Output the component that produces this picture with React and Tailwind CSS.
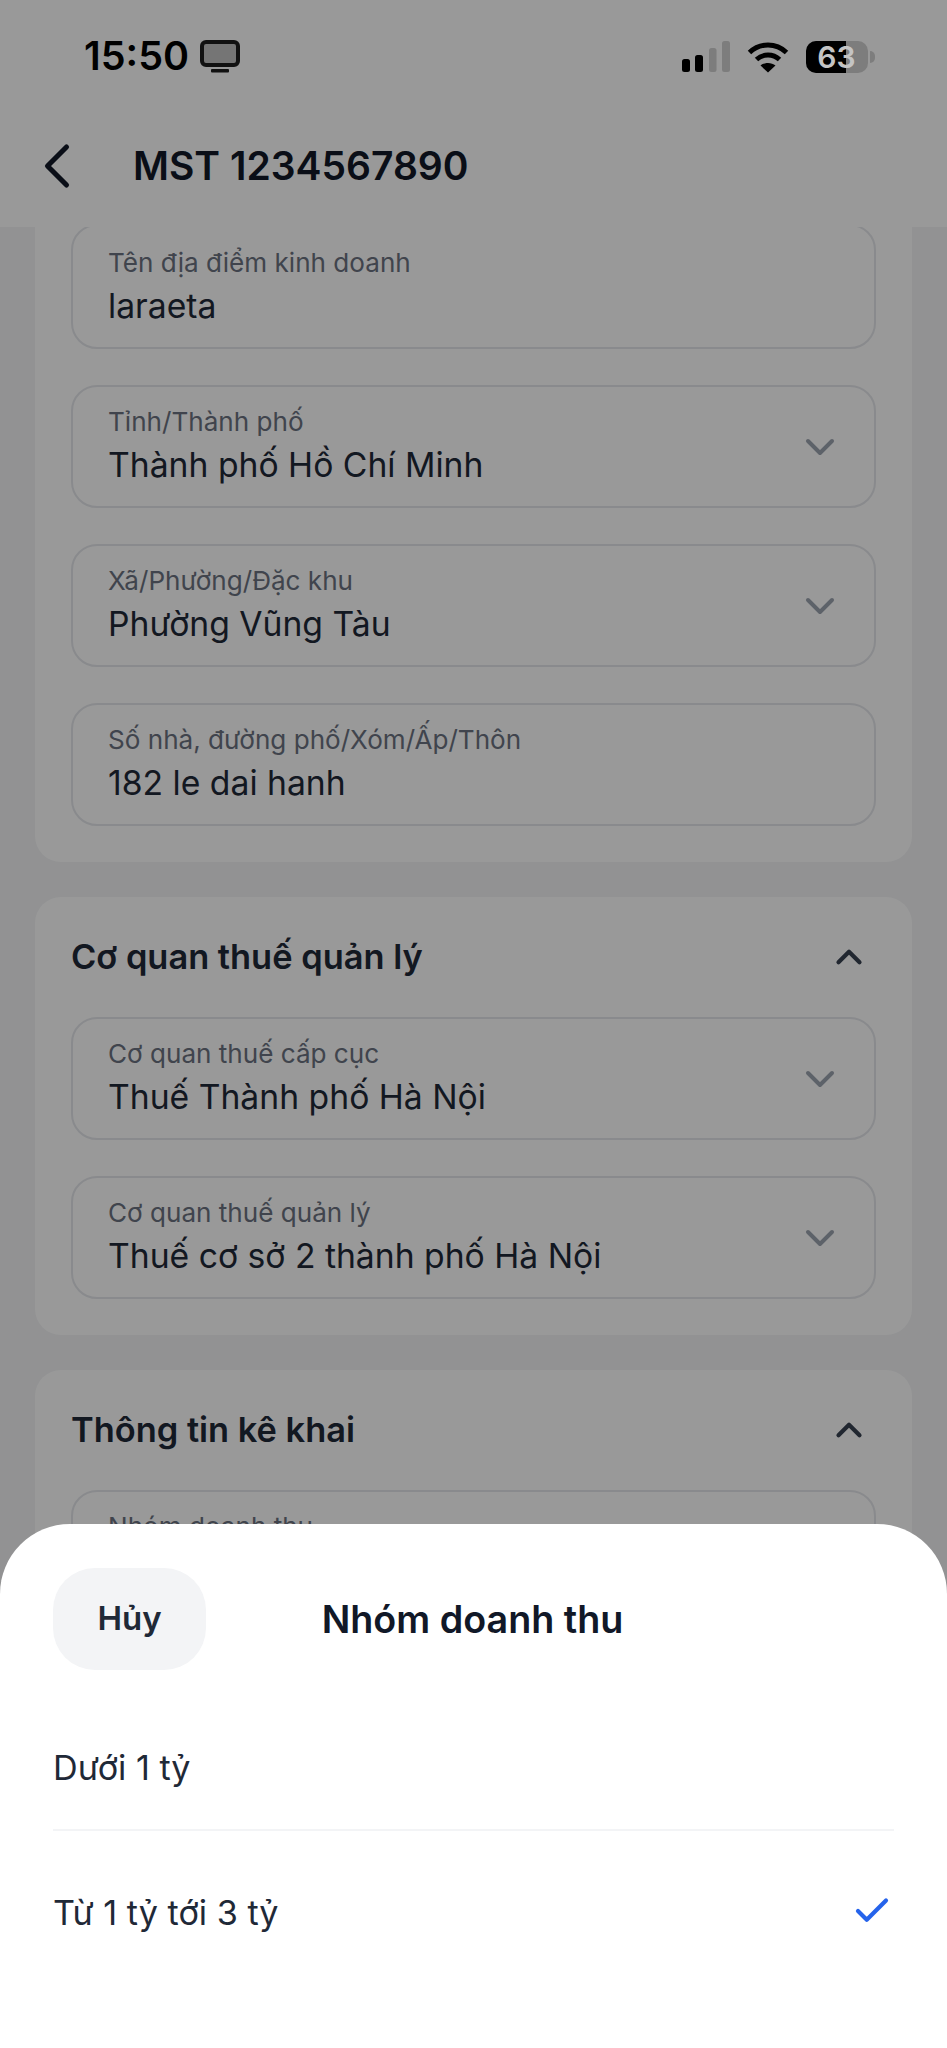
import React from 'react'
import { Check, ChevronDown, ChevronLeft, ChevronUp } from 'lucide-react'

const font = { fontFamily: 'Inter, "Noto Sans", sans-serif' }

function MonitorIcon() {
  return (
    <svg width="40" height="33" viewBox="0 0 40 33" fill="none">
      <rect x="2" y="2" width="36" height="23" rx="4" fill="#757575" stroke="#111111" strokeWidth="4" />
      <rect x="11" y="29" width="18" height="3.5" rx="1" fill="#111111" />
    </svg>
  )
}

function SignalIcon() {
  return (
    <svg width="48" height="32" viewBox="0 0 48 32">
      <rect x="0" y="18" width="8" height="13" rx="2.5" fill="#000" />
      <rect x="13" y="14" width="8" height="17" rx="2.5" fill="#000" />
      <rect x="27" y="7" width="7.5" height="24" rx="2.5" fill="#7d7d7d" />
      <rect x="40" y="0" width="8" height="31" rx="2.5" fill="#7d7d7d" />
    </svg>
  )
}

function WifiIcon() {
  return (
    <svg width="44" height="32" viewBox="0 0 42 32" fill="none" stroke="#000" strokeWidth="5">
      <path d="M2.5 11.5C13 1.5 29 1.5 39.5 11.5" />
      <path d="M9.5 18.5C16 12.5 26 12.5 32.5 18.5" />
      <path d="M21 31.5L13.5 24.5C17.5 21 24.5 21 28.5 24.5Z" fill="#000" stroke="none" />
    </svg>
  )
}

function Battery() {
  return (
    <div className="flex items-center gap-[2px]">
      <div className="relative flex h-[32px] w-[62px] rounded-[10px] bg-[#7d7d7d]">
        <div className="h-full w-[40px] rounded-l-[10px] bg-black" />
        <span className="absolute inset-0 flex items-center justify-center pr-[1px] text-[30px] leading-[32px] font-semibold text-[#c4c4c4]">63</span>
      </div>
      <div className="h-[12px] w-[5px] rounded-r-full bg-[#7d7d7d]" />
    </div>
  )
}

function Field({ label, value, select, scrolled }) {
  return (
    <div className={`flex items-center justify-between rounded-[26px] border-2 border-[#e5e7eb] pb-[2px] pl-[35px] pr-[30px] ${scrolled ? 'h-[125px] pt-[2px]' : 'h-[123px]'}`}>
      <div className="flex flex-col">
        <span className="mb-[2px] text-[26.1px] leading-[36px] text-[#6b7280]">{label}</span>
        <span className="text-[33.7px] leading-[46px] text-[#1f2937]">{value}</span>
      </div>
      {select && <ChevronDown size={48} strokeWidth={2} className="mt-[2px] text-[#9ca3af]" />}
    </div>
  )
}

function Section({ title, children }) {
  return (
    <div className="flex flex-col gap-[36px] rounded-[26px] bg-white p-[36px]">
      <div className="flex h-[48px] items-center justify-between">
        <span className="text-[34.4px] font-semibold text-[#1f2937]">{title}</span>
        <ChevronUp size={42} strokeWidth={2.4} className="mr-[6px] text-[#374151]" />
      </div>
      {children}
    </div>
  )
}

export default function App() {
  return (
    <div className="relative h-[2048px] w-[947px] overflow-hidden bg-[#f3f4f6]" style={font}>
      <div className="relative h-[227px] bg-white">
        {/* status bar stays above the dim layer, its blacks and greys are not darkened */}
        <div className="relative z-30 flex h-[110px] items-center justify-between pl-[84px] pr-[72px] pt-[3px]">
          <div className="flex items-center gap-[11px]">
            <span className="text-[39.5px] font-semibold text-black">15:50</span>
            <MonitorIcon />
          </div>
          <div className="flex items-center gap-[16px]">
            <SignalIcon />
            <WifiIcon />
            <Battery />
          </div>
        </div>
        <div className="flex h-[112px] items-center pl-[19px]">
          <ChevronLeft size={76} strokeWidth={1.6} className="text-[#111827]" />
          <span className="ml-[38px] text-[39px] font-semibold text-[#111827]">MST 1234567890</span>
        </div>
      </div>

      <div className="mt-[-3px] flex flex-col gap-[35px] px-[35px]">
        <div className="flex flex-col gap-[36px] rounded-b-[26px] bg-white px-[36px] pb-[36px]">
          <Field label="Tên địa điểm kinh doanh" value="laraeta" scrolled />
          <Field label="Tỉnh/Thành phố" value="Thành phố Hồ Chí Minh" select />
          <Field label="Xã/Phường/Đặc khu" value="Phường Vũng Tàu" select />
          <Field label="Số nhà, đường phố/Xóm/Ấp/Thôn" value="182 le dai hanh" />
        </div>
        <Section title="Cơ quan thuế quản lý">
          <Field label="Cơ quan thuế cấp cục" value="Thuế Thành phố Hà Nội" select />
          <Field label="Cơ quan thuế quản lý" value="Thuế cơ sở 2 thành phố Hà Nội" select />
        </Section>
        <Section title="Thông tin kê khai">
          <Field label="Nhóm doanh thu" value="Từ 1 tỷ tới 3 tỷ" select />
        </Section>
      </div>

      <div className="absolute inset-0 z-20 bg-black/40" />

      <div className="absolute inset-x-0 bottom-0 z-30 h-[524px] rounded-t-[70px] bg-white">
        <div className="relative flex h-[190px] items-center justify-center pr-[2px]">
          <button className="absolute left-[53px] top-[44px] flex h-[102px] w-[153px] items-center justify-center rounded-[42px] bg-[#f3f4f6] text-[33px] font-semibold text-[#1f2937]">
            Hủy
          </button>
          <span className="text-[37.7px] font-semibold text-[#111827]">Nhóm doanh thu</span>
        </div>
        <div className="mx-[53px] flex h-[117px] items-center border-b-2 border-[#f3f4f6] pb-[7px] text-[34.2px] text-[#1f2937]">Dưới 1 tỷ</div>
        <div className="mx-[53px] flex h-[163px] items-center justify-between text-[34.2px] text-[#1f2937]">
          <span>Từ 1 tỷ tới 3 tỷ</span>
          <Check size={42} strokeWidth={2.4} className="mr-[1px] mb-[3px] text-[#2563eb]" />
        </div>
      </div>
    </div>
  )
}
